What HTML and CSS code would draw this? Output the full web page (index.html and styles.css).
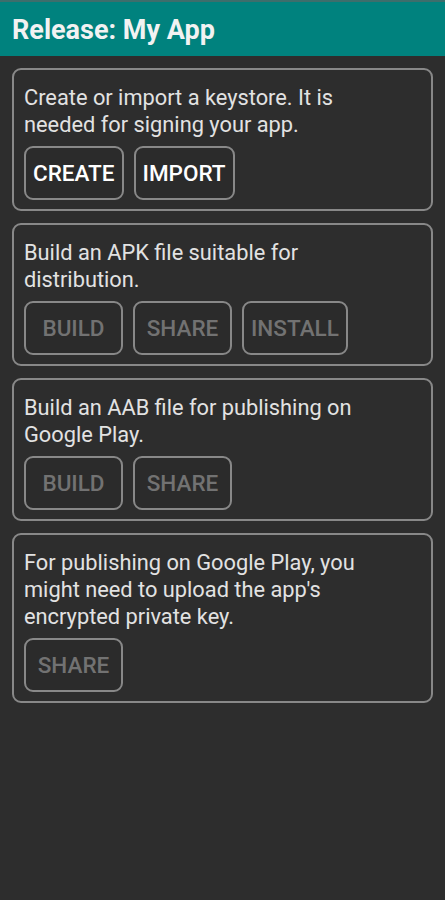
FILE: index.html
```html
<!DOCTYPE html>
<html lang="en">
<head>
    <meta charset="UTF-8">
    <meta name="viewport" content="width=device-width, initial-scale=1.0">
    <title>Release: My App</title>
    <link rel="stylesheet" href="styles.css">
</head>
<body>
    <header class="app-bar">Release: My App</header>
    <main class="content">
        <section class="card">
            <p>Create or import a keystore. It is needed for signing your app.</p>
            <div class="actions">
                <button class="action">CREATE</button>
                <button class="action">IMPORT</button>
            </div>
        </section>
        <section class="card">
            <p>Build an APK file suitable for distribution.</p>
            <div class="actions">
                <button class="action" disabled>BUILD</button>
                <button class="action" disabled>SHARE</button>
                <button class="action" disabled>INSTALL</button>
            </div>
        </section>
        <section class="card">
            <p>Build an AAB file for publishing on Google Play.</p>
            <div class="actions">
                <button class="action" disabled>BUILD</button>
                <button class="action" disabled>SHARE</button>
            </div>
        </section>
        <section class="card">
            <p>For publishing on Google Play, you might need to upload the app's encrypted private key.</p>
            <div class="actions">
                <button class="action" disabled>SHARE</button>
            </div>
        </section>
    </main>
</body>
</html>
```

FILE: styles.css
```css
body {
    font-family: Roboto, 'Noto Sans', sans-serif;
    background: #2d2d2d;
    color: #e2e2e2;
    margin: 0;
    height: 100vh;
}

.app-bar {
    background: #00827e;
    border-top: 2px solid #3d6e6c;
    color: #f2f2f2;
    font-size: 27px;
    font-weight: bold;
    height: 54px;
    line-height: 56px;
    padding: 0 12px;
}

.content {
    display: flex;
    flex-direction: column;
    gap: 12px;
    padding: 12px 12px;
}

.card {
    border: 2px solid #888;
    border-radius: 9px;
    padding: 14px 10px 9px;
}

.card p {
    margin: 0 0 8px;
    font-size: 21.8px;
    line-height: 27px;
    padding-right: 50px;
}

.actions {
    display: flex;
    gap: 10px;
}

.action {
    font-family: Roboto, 'Noto Sans', sans-serif;
    font-size: 22.5px;
    font-weight: 500;
    background: #2b2b2b;
    color: #fff;
    border: 2px solid #888;
    border-radius: 9px;
    height: 54px;
    min-width: 99px;
    padding: 0 7px;
}

.action:disabled {
    color: #727272;
}
```
